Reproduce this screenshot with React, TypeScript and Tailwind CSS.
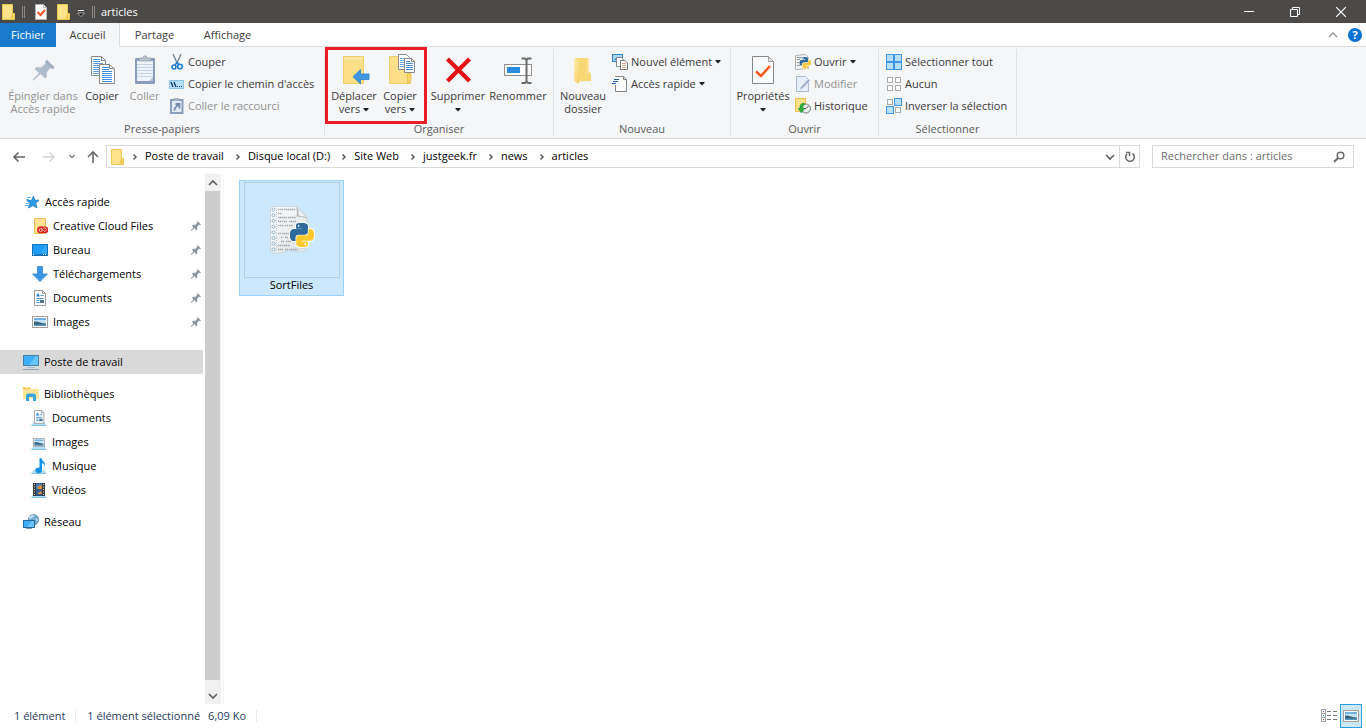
import type { ReactNode } from "react";

/* ---------- Shared drawings ---------- */

const PY_BLUE =
  "M14.25.18l.9.2.73.26.59.3.45.32.34.34.25.34.16.33.1.3.04.26.02.2-.01.13V8.5l-.05.63-.13.55-.21.46-.26.38-.3.31-.33.25-.35.19-.35.14-.33.1-.3.07-.26.04-.21.02H8.77l-.69.05-.59.14-.5.22-.41.27-.33.32-.27.35-.2.36-.15.37-.1.35-.07.32-.04.27-.02.21v3.06H3.17l-.21-.03-.28-.07-.32-.12-.35-.18-.36-.26-.36-.36-.35-.46-.32-.59-.28-.73-.21-.88-.14-1.05-.05-1.23.06-1.22.16-1.04.24-.87.32-.71.36-.57.4-.44.42-.33.42-.24.4-.16.36-.1.32-.05.24-.01h.16l.06.01h8.16v-.83H6.18l-.01-2.75-.02-.37.05-.34.11-.31.17-.28.25-.26.31-.23.38-.2.44-.18.51-.15.58-.12.64-.1.71-.06.77-.04.84-.02 1.27.05zm-6.3 1.98l-.23.33-.08.41.08.41.23.34.33.22.41.09.41-.09.33-.22.23-.34.08-.41-.08-.41-.23-.33-.33-.22-.41-.09-.41.09z";
const PY_YELLOW =
  "M21.1 6.11l.28.06.32.12.35.18.36.27.36.35.35.47.32.59.28.73.21.88.14 1.04.05 1.23-.06 1.23-.16 1.04-.24.86-.32.71-.36.57-.4.45-.42.33-.42.24-.4.16-.36.09-.32.05-.24.02-.16-.01h-8.22v.82h5.84l.01 2.76.02.36-.05.34-.11.31-.17.29-.25.25-.31.24-.38.2-.44.17-.51.15-.58.13-.64.09-.71.07-.77.04-.84.01-1.27-.04-1.07-.14-.9-.2-.73-.25-.59-.3-.45-.33-.34-.34-.25-.34-.16-.33-.1-.3-.04-.25-.02-.2.01-.13v-5.34l.05-.64.13-.54.21-.46.26-.38.3-.32.33-.24.35-.2.35-.14.33-.1.3-.06.26-.04.21-.02.13-.01h5.84l.69-.05.59-.14.5-.21.41-.28.33-.32.27-.35.2-.36.15-.36.1-.35.07-.32.04-.28.02-.21V6.07h2.09l.14.01zm-6.47 14.25l-.23.33-.08.41.08.41.23.33.33.23.41.08.41-.08.33-.23.23-.33.08-.41-.08-.41-.23-.33-.33-.23-.41-.08-.41.08z";

function Svg({ size = 16, children }: { size?: number; children: ReactNode }) {
  return (
    <svg width={size} height={size} viewBox={`0 0 ${size} ${size}`} fill="none" className="shrink-0" aria-hidden="true">
      {children}
    </svg>
  );
}

function Caret() {
  return (
    <svg width="6" height="4" viewBox="0 0 6 4" className="inline-block shrink-0 align-middle" aria-hidden="true">
      <path d="M.5 0h5v1L3 3.5.5 1z" fill="#222" />
    </svg>
  );
}

function Chevron({ dir = "down", color = "#606060" }: { dir?: "down" | "up" | "right"; color?: string }) {
  const d = { down: "M1 3l4 4 4-4", up: "M1 7l4-4 4 4", right: "M3.5 2.5L6 5 3.5 7.5" }[dir];
  return (
    <svg width="10" height="10" viewBox="0 0 10 10" fill="none" className="shrink-0" aria-hidden="true">
      <path d={d} stroke={color} strokeWidth="1.6" />
    </svg>
  );
}

function FolderIcon() {
  return (
    <Svg>
      <path d="M2.5.5h10v15h-10z" fill="#ffe38b" stroke="#f0c64c" />
      <path d="M12.5 9.5h2v6h-4z" fill="#fddc78" stroke="#f0c64c" />
      <path d="M12.5 11v4" stroke="#f0c64c" />
    </Svg>
  );
}

function CheckPage() {
  return (
    <Svg>
      <path d="M2.5.5h8l3 3v12h-11z" fill="#fff" stroke="#b5b5b5" />
      <path d="M10.5.5v3h3" stroke="#b5b5b5" />
      <path d="M4.5 8l3 3L12 6" stroke="#f4511e" strokeWidth="2" />
    </Svg>
  );
}

/* ---------- Ribbon icons, 32px ---------- */

function PinBig() {
  return (
    <Svg size={32}>
      <path d="M20 6l7.5 7.500-2 1.500-2-1-4 4.500.5 4-2 2-4.500-4.500L7 26l-1 .5L5.500 26l6.500-7L7.500 15l2-2 4.500.5L18.500 9.500l-.5-2z" fill="#b0bccb" />
      <path d="M20 6l7.500 7.500-2 1.500-7-6.500z" fill="#a0aec0" />
    </Svg>
  );
}

function CopyBig() {
  const lines = "M0 0h7M0 2h7M0 4h10M0 6h10M0 8h10M0 10h10M0 12h10M0 14h10";
  return (
    <Svg size={32}>
      <path d="M5.5 2.5h10l4 4v15h-14z" fill="#fff" stroke="#8a8a8a" />
      <path d="M15.5 2.5v4h4" stroke="#8a8a8a" />
      <path d={lines} transform="translate(7 5.5)" stroke="#5b9be0" />
      <path d="M13.5 10.5h10l5 4.500v14.500h-15z" fill="#fff" stroke="#8a8a8a" />
      <path d="M23.5 10.5v4h5" stroke="#8a8a8a" />
      <path d={lines} transform="translate(16 13.5)" stroke="#3f8bdc" />
    </Svg>
  );
}

function PasteBig() {
  return (
    <Svg size={32}>
      <rect x="6" y="4" width="20" height="26" rx="1" fill="#8a9dbf" />
      <rect x="8" y="7" width="16" height="20" fill="#eff4fa" />
      <path d="M8 10.5h16M8 13.5h16M8 16.5h16M8 19.5h16M8 22.5h16" stroke="#c6d3e3" />
      <path d="M10 7V4h4c0-3 4-3 4 0h4v3z" fill="#b7c1d0" stroke="#8d99ac" strokeWidth=".7" />
      <path d="M20 27l4-4v4z" fill="#b5c3d8" />
    </Svg>
  );
}

function MoveToBig() {
  return (
    <Svg size={32}>
      <path d="M5.5 2.500h20v27h-20z" fill="#ffe08a" stroke="#f0cd6c" />
      <path d="M6 3h19v3H6z" fill="#ffe7a0" />
      <path d="M22.500 15.500V20h8.500v5.500h-8.500V30L15 22.700z" fill="#3f97e3" stroke="#2a7fcb" strokeWidth=".8" />
    </Svg>
  );
}

function CopyToBig() {
  return (
    <Svg size={32}>
      <path d="M5.5 2.5h18v18h3v9h-21z" fill="#ffe08a" stroke="#f0cd6c" />
      <path d="M23.5 19.5h3.500v6l-1.500 4h-2z" fill="#fbd568" stroke="#ecc458" />
      <path d="M14.5.5h8l3 3v12h-11z" fill="#fff" stroke="#8a8a8a" />
      <path d="M16 4.500h5M16 6.500h5M16 8.500h5M16 10.500h5M16 12.500h5" stroke="#6fa8e4" />
      <path d="M20.5 4.5h7l3 3v11h-10z" fill="#fff" stroke="#8a8a8a" />
      <path d="M27.5 4.5v3h3" stroke="#8a8a8a" />
      <path d="M22 7.5h4M22 9.5h7M22 11.5h7M22 13.5h7M22 15.5h7" stroke="#3f8bdc" />
    </Svg>
  );
}

function DeleteBig() {
  return (
    <Svg size={32}>
      <path d="M5.5 5L27.500 27M27.500 5L5.5 27" stroke="#e50f14" strokeWidth="4.200" />
    </Svg>
  );
}

function RenameBig() {
  return (
    <Svg size={32}>
      <rect x="2.5" y="10.5" width="27" height="11" fill="#fff" stroke="#8f8f8f" />
      <rect x="5" y="13" width="13" height="6" fill="#2b8de0" />
      <path d="M19.500 4.500H23l1.500 1.500L26 4.500h3.500M24.500 5v23M19.500 29H23l1.500-1.500L26 29h3.500" stroke="#6b6b6b" strokeWidth="2" />
    </Svg>
  );
}

function NewFolderBig() {
  return (
    <Svg size={32}>
      <defs>
        <linearGradient id="folder-flap" x1="0" y1="0" x2="1" y2="1">
          <stop offset="0" stopColor="#fff0b8" />
          <stop offset="1" stopColor="#f6cf60" />
        </linearGradient>
      </defs>
      <path d="M7 4h15v14l2 2v7H8z" fill="#f9d878" />
      <path d="M7 4h1l4 5v21l-5-3z" fill="url(#folder-flap)" />
      <path d="M20 4h2v14l-2 2z" fill="#fce39b" />
      <path d="M12 27h13l-13 1z" fill="#e9e5d6" />
    </Svg>
  );
}

function PropertiesBig() {
  return (
    <Svg size={32}>
      <path d="M5.5 2.5h16l5 5v22h-21z" fill="#fafbfc" stroke="#878787" />
      <path d="M21.5 2.5v5h5z" fill="#e6e6e6" stroke="#9a9a9a" />
      <path d="M9 17.500l5 4.500 9-10" stroke="#f25a1d" strokeWidth="2.600" />
    </Svg>
  );
}

/* ---------- Ribbon icons, 16px ---------- */

function CutIcon() {
  return (
    <Svg>
      <path d="M4 0l4.500 10M12 0L7.500 10" stroke="#7b8894" strokeWidth="1.400" />
      <circle cx="5" cy="13" r="2" stroke="#1f7fce" strokeWidth="1.600" />
      <circle cx="11" cy="12.500" r="2.300" stroke="#1f7fce" strokeWidth="1.600" />
      <path d="M6 11l2-2.500 2 2" stroke="#1f7fce" strokeWidth="1.600" />
    </Svg>
  );
}

function PathIcon() {
  return (
    <Svg>
      <rect x=".5" y="4.5" width="14" height="8" fill="#b9e0fb" stroke="#8fc4ea" />
      <path d="M2 6l2 5M5 6l2 5" stroke="#153c63" strokeWidth="1.400" />
      <path d="M8 10.5h1M10 10.5h1M12 10.5h1" stroke="#153c63" />
    </Svg>
  );
}

function ShortcutIcon() {
  return (
    <Svg>
      <rect x="2" y="2" width="11.500" height="13" fill="#e4ebf5" stroke="#8a9dbf" strokeWidth="2" />
      <rect x="5" y="0" width="5" height="3" fill="#a5b2c6" />
      <path d="M5.500 12.500c0-3 1-4 4-5.500M6.500 6h4v4.500" stroke="#7389ae" strokeWidth="1.800" />
    </Svg>
  );
}

function NewItemIcon() {
  return (
    <Svg>
      <rect x=".5" y=".5" width="10" height="7" fill="#a9d7f5" stroke="#2f83c4" />
      <path d="M2 6l3-3 3 3z" fill="#2f83c4" />
      <path d="M4.5 3.500h5l2 2v7h-7z" fill="#fff" stroke="#8a8a8a" />
      <path d="M8.5 6.5h4.500l2.500 2.500v6.500h-7z" fill="#fff" stroke="#777" />
      <path d="M10 9.5h4M10 11.5h4M10 13.5h4" stroke="#e8a48a" />
    </Svg>
  );
}

function EasyAccessIcon() {
  return (
    <Svg>
      <path d="M3.5.5h8l3 3v12h-11z" fill="#fff" stroke="#858585" />
      <path d="M11.5.5v3h3" stroke="#858585" />
      <path d="M3 1v8" stroke="#f5f6f7" strokeWidth="2" />
      <path d="M2 3.500h5M1 5.500h5M0 7.500h4" stroke="#1f5f9f" />
    </Svg>
  );
}

function OpenIcon() {
  return (
    <Svg>
      <path d="M.5 1.500l10-1 3 3v11l-13 1z" fill="#f4f4f4" stroke="#b0b0b0" />
      <path d="M2 3.500h6M2 5.500h3M2 8.500h2M2 11.500h3" stroke="#8f9aa5" />
      <g transform="translate(4.500 3) scale(.48)" strokeWidth="1.500" paintOrder="stroke">
        <path d={PY_BLUE} fill="#30699b" stroke="#fff" />
        <path d={PY_YELLOW} fill="#fdcb3a" stroke="#fff" />
      </g>
    </Svg>
  );
}

function EditIcon() {
  return (
    <Svg>
      <path d="M1.5.5h9l3 3v12h-12z" fill="#e6eef8" stroke="#a9bad0" />
      <path d="M13.5 3L15 4.500 7 13l-2.500 1L6 11z" fill="#93a8c6" stroke="#dce6f2" strokeWidth=".6" />
    </Svg>
  );
}

function HistoryIcon() {
  return (
    <Svg>
      <path d="M.5.5h10v13H.5z" fill="#ffe08a" stroke="#ecc24a" />
      <circle cx="11" cy="10.500" r="4.500" fill="#e8eaec" stroke="#777" />
      <path d="M11 10.500L13.500 8M11 10.500H8.500" stroke="#555" />
      <path d="M9 5C5.500 5.500 4.500 7.500 5 10.500H3L6.500 15 9.500 10.500H8c-.5-2 0-3.500 2-4z" fill="#2fae3f" stroke="#1c8a2d" strokeWidth=".5" />
    </Svg>
  );
}

// Four tiles; a filled tile is a selected one
function TilesIcon({ filled, joined = false }: { filled: boolean[]; joined?: boolean }) {
  const spots = [[0, 0], [8, 0], [0, 8], [8, 8]];
  return (
    <Svg>
      {spots.map(([x, y], i) =>
        filled[i] ? (
          <rect key={i} x={x + 0.5} y={y + 0.5} width="7" height="7" fill="#b7defb" stroke="#3c96e2" />
        ) : (
          <rect key={i} x={x + 1.5} y={y + 1.5} width="5" height="5" fill="#fff" stroke="#adadad" />
        )
      )}
      {joined && <path d="M8 0v16M0 8h16" stroke="#3c96e2" strokeWidth="2" />}
    </Svg>
  );
}

/* ---------- Navigation pane icons ---------- */

function StarIcon() {
  return (
    <Svg>
      <path d="M9.500 2l1.200 4.200h4.300l-3.300 3 1.300 4.800-4-2.500L4.500 14l1.500-4.500-3-3h4.500z" fill="#2f9ce8" stroke="#1979c4" strokeWidth=".8" />
      <path d="M3 3.5h4M2 5.500h3M2 9.5h3M1 11.500h4" stroke="#5fb6ef" />
    </Svg>
  );
}

function CreativeCloudIcon() {
  return (
    <Svg>
      <path d="M2.5.5h11v15h-11z" fill="#ffe392" stroke="#e9c250" />
      <path d="M8.500 8.500h4a3.300 3.300 0 0 1 1 6.800H8.500a3.400 3.400 0 0 1 0-6.800z" fill="#da1f26" />
      <circle cx="8.700" cy="12" r="1.600" stroke="#ffe0c0" strokeWidth=".8" />
      <path d="M9.500 10.500l2.500 2.800a1.700 1.700 0 1 0-.5-3" stroke="#ffe0c0" strokeWidth=".8" />
    </Svg>
  );
}

function DesktopIcon() {
  return (
    <Svg>
      <rect x=".5" y="2.5" width="15" height="11" fill="#1f9cf3" stroke="#1670b8" />
      <path d="M8 11.500L14 3h1v8.500z" fill="#35aaf8" />
      <path d="M1 12.5h14" stroke="#1573bd" />
      <path d="M1 12.5h1M11 12.5h1M13 12.5h1" stroke="#fff" />
    </Svg>
  );
}

function DownloadIcon() {
  return (
    <Svg>
      <path d="M5.5.5h5v7.500h5L8 15.500.5 8h5z" fill="#3c97e4" stroke="#2f86d2" strokeWidth=".8" />
    </Svg>
  );
}

function PageDrawing() {
  return (
    <>
      <path d="M2.5.5h8l3 3v12h-11z" fill="#fff" stroke="#9a9a9a" />
      <path d="M10.5.5v3h3" stroke="#9a9a9a" />
      <path d="M4 6.500l1.500-3h1l1.500 3z" fill="#2f85c9" />
      <path d="M8.5 5.5h3M4.5 8.5h7M4.5 10.5h3M4.5 12.5h3" stroke="#3e93d2" />
      <path d="M8 10h4v3H8z" fill="#4d7894" />
    </>
  );
}

function DocumentIcon() {
  return <Svg><PageDrawing /></Svg>;
}

function PictureDrawing() {
  return (
    <>
      <rect x=".5" y="2.5" width="15" height="11" fill="#fff" stroke="#a0a0a0" />
      <path d="M2 4h12v8H2z" fill="#c5e3f7" />
      <path d="M2 4h12v2H2z" fill="#6fb1e6" />
      <path d="M2 7.500c4-.5 7 2 12 2V12H2z" fill="#35627a" />
      <path d="M2 10.5h12V12H2z" fill="#5796bd" />
    </>
  );
}

function PictureIcon() {
  return <Svg><PictureDrawing /></Svg>;
}

function ComputerIcon() {
  return (
    <Svg>
      <rect x=".5" y="1.5" width="15" height="10" fill="#3fb0f7" stroke="#4580ab" />
      <path d="M6 11l7-9h2v9z" fill="#68c5fc" />
      <path d="M4 13.5h8" stroke="#a3bdd3" />
      <path d="M0 15.5h16" stroke="#8ca6c0" />
    </Svg>
  );
}

function LibraryIcon() {
  return (
    <Svg>
      <path d="M0 2h7l1 1h8v10H0z" fill="#ffe596" />
      <path d="M0 1h7v2H0z" fill="#f5c542" />
      <path d="M2 1.500h4" stroke="#fff2c0" />
      <path d="M3 15V9l1.500-1.500h7L13 9v6h-3v-4H6v4z" fill="#36a5e4" />
    </Svg>
  );
}

// Small blue stand drawn under every library
function OnStand({ children }: { children: ReactNode }) {
  return (
    <Svg>
      <path d="M2.500 12h11l2 3.500H.5z" fill="#b5def9" />
      <path d="M0 15.5h15" stroke="#7cc3ee" />
      {children}
    </Svg>
  );
}

function LibDocumentIcon() {
  return <OnStand><g transform="translate(1.300 0) scale(.86)"><PageDrawing /></g></OnStand>;
}

function LibPictureIcon() {
  return <OnStand><g transform="translate(2 2.500) scale(.75)"><PictureDrawing /></g></OnStand>;
}

function LibMusicIcon() {
  return (
    <OnStand>
      <path d="M8.500 0h2c0 3 4.500 3.500 3.500 9-.5-2.500-1.500-3.500-3-4v7a3.400 2.800 0 1 1-2.500-2.300z" fill="#1593e6" />
    </OnStand>
  );
}

function LibVideoIcon() {
  return (
    <OnStand>
      <path d="M2 1h12v13H2z" fill="#3a3a3a" />
      <path d="M5 1.500h6v6H5z" fill="#3e80bd" />
      <path d="M5 8h6v5.500H5z" fill="#315f96" />
      <path d="M6 5l3-2 2 1v3H7zM7 11l3-2 1 3H7z" fill="#e68a3b" />
      <path d="M3.5 2v11.500M12.5 2v11.500" stroke="#d8d8d8" strokeDasharray="1 1.500" />
    </OnStand>
  );
}

function NetworkIcon() {
  return (
    <Svg>
      <circle cx="10.500" cy="5.700" r="5.200" fill="#6ea9d0" stroke="#4e86ad" strokeWidth=".7" />
      <path d="M6 3c2-2 4-2 6-1.500L9 4 6 5zM12 4l3 1-1 3z" fill="#c5e2f2" />
      <rect x=".5" y="6.500" width="11" height="7" fill="#41adf4" stroke="#24699c" />
      <path d="M4 13l5-6h2v6z" fill="#6bc3fa" />
      <path d="M3 14.500h6" stroke="#7b98b4" />
    </Svg>
  );
}

function PinSmall() {
  return (
    <svg width="12" height="12" viewBox="0 0 12 12" className="shrink-0" aria-hidden="true">
      <path d="M7.500 1L11 4.500l-1 .5-1-.2-2 2.500.3 2-1 1-2-2L1.300 11l-.6-.5L3.500 7.500 2 5.700l1-1 2 .3 2.200-2L7 1.500z" fill="#8b969f" />
    </svg>
  );
}

/* Python source file: a torn listing with the logo over it */
function PythonFileIcon() {
  const rows = [0, 1, 2, 3, 4, 5, 6, 7];
  return (
    <Svg size={48}>
      <defs>
        <linearGradient id="sheet" x1="0" y1="0" x2="1" y2="1">
          <stop offset="0" stopColor="#fdfdfe" />
          <stop offset="1" stopColor="#dde1e4" />
        </linearGradient>
      </defs>
      <path d="M2.500.5h27l9.500 10v34c-8 4-14-2-21 1-5 2-10 1.500-15.500 1.500z" fill="url(#sheet)" stroke="#c5d2dc" strokeWidth=".8" />
      {rows.map((r) => (
        <circle key={r} cx="5.500" cy={3.500 + r * 5.700} r="1.500" fill="#fff" stroke="#8fb0cc" />
      ))}
      <path d="M8.500 2v43" stroke="#c0cbd4" strokeDasharray="1 1" />
      <path
        d="M10 3.500h5M16 3.500h11M10 7.500h4M10 11.500h9M20 11.500h8M10 15.500h5M16 15.500h3M21 15.500h7M10 19.500h6M17 19.500h3M21 19.500h4M10 27.500h3M14 27.500h7M13 31.500h2M17 31.500h3M13 35.500h3M18 35.500h5M10 39.500h12M10 43.500h5M17 43.500h3M21 43.500h9M32 41.500h5"
        stroke="#a5a9ad"
        strokeWidth="1.500"
        strokeDasharray="1.500 .5"
      />
      <path d="M28 1l11 11.500-4-1.500-7-.5c1.500-2 1-6 0-9.500z" fill="#b9bdc1" />
      <path d="M29 1.500L38.500 11.500 30 9.500c1-2 .5-5-1-8z" fill="#f4f5f6" stroke="#a7adb3" strokeWidth=".5" />
      <g transform="translate(22 17)" stroke="#fff" strokeWidth="2" paintOrder="stroke">
        <path d={PY_BLUE} fill="#2f6a9c" />
        <path d={PY_YELLOW} fill="#fdc92f" />
        <path d={PY_BLUE} fill="#2f6a9c" stroke="none" />
      </g>
    </Svg>
  );
}

/* ---------- Building blocks ---------- */

function RibbonGroup({ label, children }: { label: string; children: ReactNode }) {
  return (
    <section className="flex flex-col justify-between" aria-label={label}>
      <div className="flex">{children}</div>
      <h2 className="pb-px text-center leading-4 text-[#5b5b5b]">{label}</h2>
    </section>
  );
}

function Divider() {
  return <div className="my-0.5 w-px bg-[#e2e3e4]" />;
}

type BigButtonProps = { icon: ReactNode; width: string; disabled?: boolean; children: ReactNode };

function BigButton({ icon, width, disabled, children }: BigButtonProps) {
  return (
    <button
      type="button"
      disabled={disabled}
      className={`flex flex-col items-center gap-[3px] pt-[7px] leading-[13px] whitespace-nowrap disabled:text-[#929292] ${width}`}
    >
      {icon}
      <span className="block text-center">{children}</span>
    </button>
  );
}

type SmallButtonProps = { icon: ReactNode; label: string; disabled?: boolean; caret?: boolean };

function SmallButton({ icon, label, disabled, caret }: SmallButtonProps) {
  return (
    <button
      type="button"
      disabled={disabled}
      className="flex h-[22px] items-center gap-[3px] whitespace-nowrap disabled:text-[#929292]"
    >
      {icon}
      <span>{label}</span>
      {caret && <Caret />}
    </button>
  );
}

type NavItem = { label: string; icon: ReactNode; pad: string; pinned?: boolean; active?: boolean };

const navGroups: { gap: string; items: NavItem[] }[] = [
  {
    gap: "mt-4",
    items: [
      { label: "Accès rapide", icon: <StarIcon />, pad: "pl-6" },
      { label: "Creative Cloud Files", icon: <CreativeCloudIcon />, pad: "pl-8", pinned: true },
      { label: "Bureau", icon: <DesktopIcon />, pad: "pl-8", pinned: true },
      { label: "Téléchargements", icon: <DownloadIcon />, pad: "pl-8", pinned: true },
      { label: "Documents", icon: <DocumentIcon />, pad: "pl-8", pinned: true },
      { label: "Images", icon: <PictureIcon />, pad: "pl-8", pinned: true },
    ],
  },
  {
    gap: "mt-4",
    items: [{ label: "Poste de travail", icon: <ComputerIcon />, pad: "pl-[23px]", active: true }],
  },
  {
    gap: "mt-2",
    items: [
      { label: "Bibliothèques", icon: <LibraryIcon />, pad: "pl-[23px]" },
      { label: "Documents", icon: <LibDocumentIcon />, pad: "pl-[31px]" },
      { label: "Images", icon: <LibPictureIcon />, pad: "pl-[31px]" },
      { label: "Musique", icon: <LibMusicIcon />, pad: "pl-[31px]" },
      { label: "Vidéos", icon: <LibVideoIcon />, pad: "pl-[31px]" },
    ],
  },
  {
    gap: "mt-2",
    items: [{ label: "Réseau", icon: <NetworkIcon />, pad: "pl-[23px]" }],
  },
];

const crumbs = ["Poste de travail", "Disque local (D:)", "Site Web", "justgeek.fr", "news", "articles"];

/* ---------- Page sections ---------- */

function TitleBar() {
  return (
    <header className="flex h-[23px] items-center bg-[#4b4a48] text-white">
      <FolderIcon />
      <span className="ml-1.5 h-3 w-[3px] border-x border-[#8a8987]" />
      <button type="button" className="ml-2" aria-label="Propriétés"><CheckPage /></button>
      <button type="button" className="ml-1.5" aria-label="Nouveau dossier"><FolderIcon /></button>
      <button type="button" className="ml-1.5" aria-label="Personnaliser la barre d'outils">
        <svg width="8" height="8" viewBox="0 0 8 8" className="mt-1" aria-hidden="true">
          <path d="M1 .5h6" stroke="#fff" />
          <path d="M.5 3h7L4 6.500z" fill="#111" stroke="#ddd" strokeWidth=".7" />
        </svg>
      </button>
      <span className="ml-[7px] h-3 w-[3px] border-x border-[#8a8987]" />
      <h1 className="ml-1.5 pt-px">articles</h1>
      <div className="mr-0.5 ml-auto flex items-center">
        <button type="button" className="flex w-[46px] justify-center" aria-label="Réduire">
          <svg width="10" height="10" viewBox="0 0 10 10" aria-hidden="true"><path d="M0 4.5h10" stroke="#fff" /></svg>
        </button>
        <button type="button" className="flex w-[46px] justify-center" aria-label="Restaurer">
          <svg width="10" height="10" viewBox="0 0 10 10" fill="none" aria-hidden="true">
            <path d="M.5 2.5h7v7h-7zM2.5 2.500v-2h7v7h-2" stroke="#fff" />
          </svg>
        </button>
        <button type="button" className="flex w-[46px] justify-center" aria-label="Fermer">
          <svg width="10" height="10" viewBox="0 0 10 10" aria-hidden="true">
            <path d="M0 0l10 10M10 0L0 10" stroke="#fff" strokeWidth="1.200" />
          </svg>
        </button>
      </div>
    </header>
  );
}

function Tabs() {
  return (
    <nav className="flex h-6 border-b border-[#dadbdc] text-[#3c3c3c]">
      <button type="button" className="-mb-px w-14 bg-[#1979ca] text-white">Fichier</button>
      <button type="button" className="-mb-px w-16 border-r border-[#dadbdc] bg-[#f5f6f7]">Accueil</button>
      <button type="button" className="-mb-px w-[69px]">Partage</button>
      <button type="button" className="-mb-px w-[77px]">Affichage</button>
      <div className="ml-auto flex items-center gap-2.5 pr-1">
        <button type="button" aria-label="Réduire le ruban"><Chevron dir="up" color="#a0a0a0" /></button>
        <button type="button" className="h-3.5 w-3.5 rounded-full bg-[#0a72d0] font-bold leading-[14px] text-white">?</button>
      </div>
    </nav>
  );
}

function Ribbon() {
  return (
    <div className="flex h-[92px] border-b border-[#dadbdc] bg-[#f5f6f7] text-[#3a3a3a]">
      <RibbonGroup label="Presse-papiers">
        <BigButton icon={<PinBig />} width="ml-1 w-[78px]" disabled>Épingler dans<br />Accès rapide</BigButton>
        <BigButton icon={<CopyBig />} width="w-10">Copier</BigButton>
        <BigButton icon={<PasteBig />} width="w-[45px]" disabled>Coller</BigButton>
        <div className="w-[157px] pt-1 pl-0.5">
          <SmallButton icon={<CutIcon />} label="Couper" />
          <SmallButton icon={<PathIcon />} label="Copier le chemin d'accès" />
          <SmallButton icon={<ShortcutIcon />} label="Coller le raccourci" disabled />
        </div>
      </RibbonGroup>
      <Divider />
      <RibbonGroup label="Organiser">
        <div className="relative flex w-[102px] pl-1">
          <BigButton icon={<MoveToBig />} width="w-[50px]">Déplacer<br />vers <Caret /></BigButton>
          <BigButton icon={<CopyToBig />} width="w-[42px]">Copier<br />vers <Caret /></BigButton>
          <div className="pointer-events-none absolute inset-x-0 top-0 h-[77px] border-3 border-[#ec1c24]" />
        </div>
        <BigButton icon={<DeleteBig />} width="w-[62px]">Supprimer<br /><Caret /></BigButton>
        <BigButton icon={<RenameBig />} width="w-[58px] mr-1.5">Renommer</BigButton>
      </RibbonGroup>
      <Divider />
      <RibbonGroup label="Nouveau">
        <BigButton icon={<NewFolderBig />} width="w-[58px]">Nouveau<br />dossier</BigButton>
        <div className="w-[118px] pt-1">
          <SmallButton icon={<NewItemIcon />} label="Nouvel élément" caret />
          <SmallButton icon={<EasyAccessIcon />} label="Accès rapide" caret />
        </div>
      </RibbonGroup>
      <Divider />
      <RibbonGroup label="Ouvrir">
        <BigButton icon={<PropertiesBig />} width="w-16">Propriétés<br /><Caret /></BigButton>
        <div className="w-[83px] pt-1">
          <SmallButton icon={<OpenIcon />} label="Ouvrir" caret />
          <SmallButton icon={<EditIcon />} label="Modifier" disabled />
          <SmallButton icon={<HistoryIcon />} label="Historique" />
        </div>
      </RibbonGroup>
      <Divider />
      <RibbonGroup label="Sélectionner">
        <div className="w-[137px] pt-1 pl-[7px]">
          <SmallButton icon={<TilesIcon filled={[true, true, true, true]} joined />} label="Sélectionner tout" />
          <SmallButton icon={<TilesIcon filled={[false, false, false, false]} />} label="Aucun" />
          <SmallButton icon={<TilesIcon filled={[false, true, true, false]} />} label="Inverser la sélection" />
        </div>
      </RibbonGroup>
      <Divider />
    </div>
  );
}

function AddressBar() {
  return (
    <div className="flex h-[35px] items-center pl-3">
      <button type="button" aria-label="Précédent">
        <svg width="14" height="12" viewBox="0 0 14 12" fill="none" aria-hidden="true">
          <path d="M13 6H2M6.500 1.500L2 6l4.500 4.500" stroke="#666" strokeWidth="1.600" />
        </svg>
      </button>
      <button type="button" className="ml-4" aria-label="Suivant" disabled>
        <svg width="14" height="12" viewBox="0 0 14 12" fill="none" aria-hidden="true">
          <path d="M1 6h11M7.500 1.500L12 6l-4.500 4.500" stroke="#d2d2d2" strokeWidth="1.400" />
        </svg>
      </button>
      <button type="button" className="ml-3" aria-label="Emplacements récents">
        <svg width="8" height="6" viewBox="0 0 8 6" fill="none" aria-hidden="true">
          <path d="M1.500 1L4 3.500 6.500 1" stroke="#808080" strokeWidth="1.500" />
        </svg>
      </button>
      <button type="button" className="ml-2.5" aria-label="Dossier parent">
        <svg width="14" height="14" viewBox="0 0 14 14" fill="none" aria-hidden="true">
          <path d="M7 13V2M2 7l5-5 5 5" stroke="#666" strokeWidth="1.600" />
        </svg>
      </button>

      <div className="ml-1.5 flex h-[23px] flex-1 items-center border border-[#d9d9d9] pl-0.5">
        <FolderIcon />
        {crumbs.map((crumb) => (
          <div key={crumb} className="flex items-center">
            <span className="flex w-5 justify-center"><Chevron dir="right" /></span>
            <button type="button" className="pr-1">{crumb}</button>
          </div>
        ))}
        <button type="button" className="mr-1 ml-auto" aria-label="Emplacements précédents"><Chevron /></button>
        <button type="button" className="flex h-full w-5 items-center justify-center border-l border-[#d9d9d9]" aria-label="Actualiser">
          <svg width="12" height="12" viewBox="0 0 12 12" fill="none" aria-hidden="true">
            <path d="M8.500 2.500A4.300 4.300 0 1 1 3 3M2 1.500h3.500V5" stroke="#6a6a6a" strokeWidth="1.600" />
          </svg>
        </button>
      </div>

      <label className="mx-3 flex h-[23px] w-[202px] items-center border border-[#d9d9d9] px-2">
        <input
          type="text"
          aria-label="Rechercher"
          placeholder="Rechercher dans : articles"
          className="min-w-0 flex-1 outline-none placeholder:text-[#6d6d6d]"
        />
        <svg width="12" height="12" viewBox="0 0 12 12" fill="none" aria-hidden="true">
          <circle cx="7.500" cy="4.500" r="3.300" stroke="#6a6a6a" strokeWidth="1.500" />
          <path d="M5 7l-4 4" stroke="#6a6a6a" strokeWidth="2" />
        </svg>
      </label>
    </div>
  );
}

function NavPane() {
  return (
    <aside className="flex w-56 shrink-0 border-r border-[#f4f4f4]">
      <nav className="w-[203px]">
        {navGroups.map((group, i) => (
          <ul key={i} className={group.gap}>
            {group.items.map((item) => (
              <li key={item.label}>
                <a
                  href="#"
                  className={`flex h-6 items-center gap-[5px] pr-px ${item.pad} ${item.active ? "bg-[#d9d9d9]" : ""}`}
                >
                  {item.icon}
                  <span className="flex-1">{item.label}</span>
                  {item.pinned && <PinSmall />}
                </a>
              </li>
            ))}
          </ul>
        ))}
      </nav>
      <div className="ml-0.5 flex w-4 flex-col bg-[#f0f0f0]">
        <span className="flex h-[17px] items-center justify-center"><Chevron dir="up" /></span>
        <span className="mr-px flex-1 bg-[#cdcdcd]" />
        <span className="flex h-6 items-center justify-center pt-2"><Chevron /></span>
      </div>
    </aside>
  );
}

function StatusBar() {
  return (
    <footer className="flex h-6 items-center pl-3.5 text-[#1e395b]">
      <span className="mr-2.5">1 élément</span>
      <span className="h-3 w-px bg-[#ececec]" />
      <span className="ml-[11px]">1 élément sélectionné</span>
      <span className="mr-2.5 ml-2">6,09 Ko</span>
      <span className="h-3 w-px bg-[#ececec]" />
      <div className="mr-1 ml-auto flex items-center gap-[3px]">
        <button type="button" aria-label="Détails">
          <Svg>
            <path d="M.5 1.500h4v4h-4zM.5 5.500h4v4h-4zM.5 9.500h4v4h-4z" fill="#fff" stroke="#a0a0a0" />
            <path d="M6 3.500h4M12 3.500h4M6 7.500h4M12 7.500h4M6 11.500h4M12 11.500h4" stroke="#777" />
            <path d="M2 3.500h1" stroke="#3c82c4" />
            <path d="M2 7.500h1" stroke="#3c82c4" />
            <path d="M2 11.500h1" stroke="#c43c3c" />
          </Svg>
        </button>
        <button
          type="button"
          className="flex h-6 w-[22px] items-center justify-center border border-[#2a9fdb] bg-[#cbe8f6]"
          aria-label="Grandes icônes"
        >
          <PictureIcon />
        </button>
      </div>
    </footer>
  );
}

export default function App() {
  return (
    <div className="flex h-screen flex-col overflow-hidden bg-white font-['Open_Sans','Noto_Sans',sans-serif] text-[11px] text-black">
      <TitleBar />
      <Tabs />
      <Ribbon />
      <AddressBar />
      <div className="flex min-h-0 flex-1">
        <NavPane />
        <main className="flex-1 pt-1.5 pl-[15px]">
          <button type="button" className="flex w-[105px] flex-col items-center border border-[#99d1ff] bg-[#cce8ff] pt-px pb-[3px]">
            <span className="flex h-24 w-24 items-center justify-center border border-[#b3cfe3]">
              <PythonFileIcon />
            </span>
            <span className="leading-[14px]">SortFiles</span>
          </button>
        </main>
      </div>
      <StatusBar />
    </div>
  );
}
